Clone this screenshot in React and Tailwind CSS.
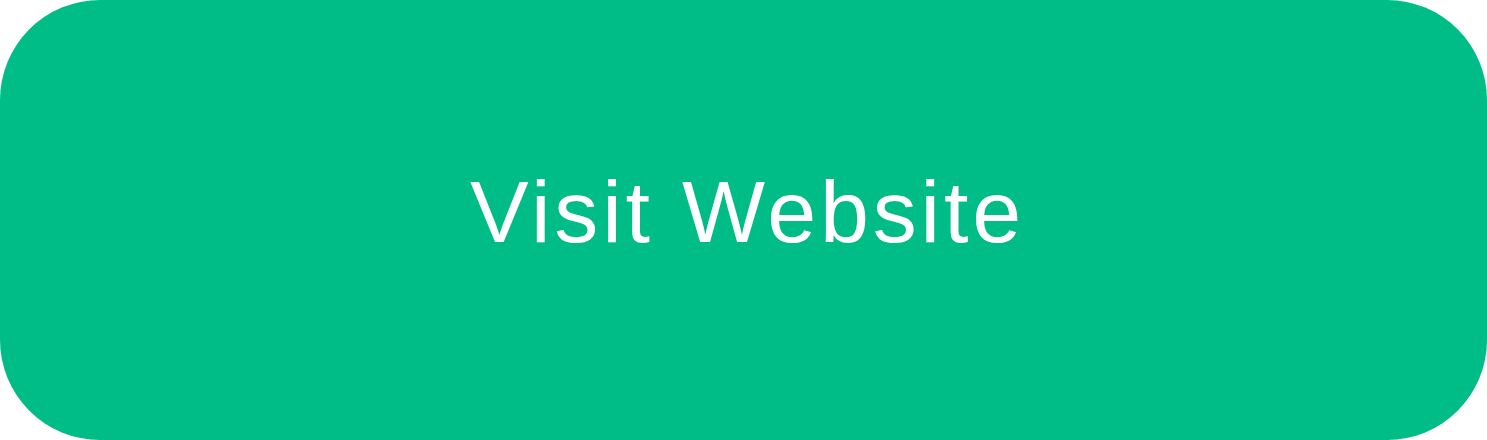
export default function App() {
  return (
    <div className="w-[1487px] h-[440px] bg-white">
      <button className="w-full h-full rounded-[100px] bg-[#00bc87] flex items-center justify-center pb-[17px] pl-[8px] text-white text-[88px] leading-none tracking-[3.8px] font-['Liberation_Sans',Arial,sans-serif]">
        Visit Website
      </button>
    </div>
  );
}
